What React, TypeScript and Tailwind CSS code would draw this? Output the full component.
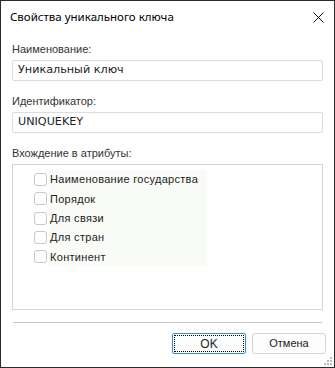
import React from "react";

const items = ["Наименование государства", "Порядок", "Для связи", "Для стран", "Континент"];

export default function App() {
  return (
    <div className="w-[335px] h-[368px] border border-[#2a2a2a] bg-white flex flex-col text-[11px] text-[#333]" style={{ fontFamily: '"Liberation Sans", Arial, sans-serif' }}>
      <div className="h-[36px] flex items-center justify-between pl-[9px] pr-[10px] shrink-0">
        <span className="text-black leading-none -mt-[4px]" style={{ fontFamily: '"Noto Sans", sans-serif', fontSize: "11.5px" }}>Свойства уникального ключа</span>
        <svg width="11" height="11" viewBox="0 0 11 11" className="-mt-[4px]">
          <path d="M0.5 0.5 L10.5 10.5 M10.5 0.5 L0.5 10.5" stroke="#111" strokeWidth="1" />
        </svg>
      </div>
      <div className="flex flex-col px-[11px]">
        <div className="h-[16px] leading-[16px] mt-[4px]">Наименование:</div>
        <div className="mt-[3px] h-[21px] border border-[#dcdcdc] rounded-[2px] flex items-center pl-[5px] text-[#222] text-[11.2px]" style={{ fontFamily: '"DejaVu Sans", Verdana, sans-serif' }}>Уникальный ключ</div>
        <div className="h-[16px] leading-[16px] mt-[12px]">Идентификатор:</div>
        <div className="mt-[3px] h-[21px] border border-[#dcdcdc] rounded-[2px] flex items-center pl-[5px] text-[#222] text-[11.2px]" style={{ fontFamily: '"DejaVu Sans", Verdana, sans-serif' }}>UNIQUEKEY</div>
        <div className="h-[16px] leading-[16px] mt-[12px]">Вхождение в атрибуты:</div>
        <div className="mt-[3px] h-[146px] border border-[#d4d4d4] pt-[5px] flex">
          <div className="flex flex-col ml-[21px] w-[15px]">
            {items.map((t) => (
              <div key={t} className="h-[19.3px] flex items-center">
                <span className="w-[13px] h-[13px] border border-[#c8c8c8] rounded-[3px] bg-white shrink-0" />
              </div>
            ))}
          </div>
          <div className="flex flex-col self-start w-[158px] bg-[#f9fbf7] pl-[1px]">
            {items.map((t) => (
              <div key={t} className="h-[19.3px] flex items-center whitespace-nowrap text-[#222] tracking-[0.3px]">
                {t}
              </div>
            ))}
          </div>
        </div>
        <div className="mt-[12px] mx-[1px] h-px bg-[#c8c8c8]" />
        <div className="mt-[10px] flex justify-end gap-[6px] -mr-[3px]">
          <div className="w-[74px] h-[21px] border border-[#3b8ad8] rounded-[2px] bg-[#fdfdfd] p-[1px]">
            <div className="w-full h-full border border-dotted border-black flex items-center justify-center text-[#222] text-[12px]">OK</div>
          </div>
          <div className="w-[74px] h-[21px] border border-[#d4d4d4] rounded-[3px] bg-[#fdfdfd] flex items-center justify-center text-[#222] text-[11px]">Отмена</div>
        </div>
      </div>
      <div className="flex-1" />
      <div className="flex justify-end">
        <svg width="10" height="10" viewBox="0 0 10 10" className="mr-[1px] mb-[1px]">
          <g fill="#bdbdbd">
            <rect x="7" y="1" width="2" height="2" />
            <rect x="4" y="4" width="2" height="2" />
            <rect x="7" y="4" width="2" height="2" />
            <rect x="1" y="7" width="2" height="2" />
            <rect x="4" y="7" width="2" height="2" />
            <rect x="7" y="7" width="2" height="2" />
          </g>
        </svg>
      </div>
    </div>
  );
}
